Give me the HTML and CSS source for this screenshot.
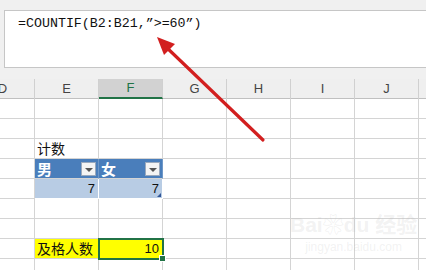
FILE: index.html
```html
<!DOCTYPE html>
<html>
<head>
<meta charset="utf-8">
<link rel="stylesheet" href="styles.css">
</head>
<body>
<div class="app">
  <div class="fbar">
    <div class="formula">=COUNTIF(B2:B21,”&gt;=60”)</div>
  </div>
  <div class="sheet">
    <div class="hdr">
      <div class="ch">D</div><div class="ch">E</div><div class="ch sel">F</div><div class="ch">G</div><div class="ch">H</div><div class="ch">I</div><div class="ch">J</div><div class="ch"></div>
    </div>
    <div class="grid">
      <div class="c"></div><div class="c"></div><div class="c"></div><div class="c"></div><div class="c"></div><div class="c"></div><div class="c"></div><div class="c"></div>
      <div class="c"></div><div class="c"></div><div class="c"></div><div class="c"></div><div class="c"></div><div class="c"></div><div class="c"></div><div class="c"></div>
      <div class="c"></div><div class="c txt">计数</div><div class="c"></div><div class="c"></div><div class="c"></div><div class="c"></div><div class="c"></div><div class="c"></div>
      <div class="c"></div><div class="c th"><span>男</span><i class="dd"></i></div><div class="c th"><span>女</span><i class="dd"></i></div><div class="c"></div><div class="c"></div><div class="c"></div><div class="c"></div><div class="c"></div>
      <div class="c"></div><div class="c td num">7</div><div class="c td num last">7</div><div class="c"></div><div class="c"></div><div class="c"></div><div class="c"></div><div class="c"></div>
      <div class="c"></div><div class="c"></div><div class="c"></div><div class="c"></div><div class="c"></div><div class="c"></div><div class="c"></div><div class="c"></div>
      <div class="c"></div><div class="c"></div><div class="c"></div><div class="c"></div><div class="c"></div><div class="c"></div><div class="c"></div><div class="c"></div>
      <div class="c"></div><div class="c yl txt">及格人数</div><div class="c yl num active">10</div><div class="c"></div><div class="c"></div><div class="c"></div><div class="c"></div><div class="c"></div>
      <div class="c"></div><div class="c"></div><div class="c"></div><div class="c"></div><div class="c"></div><div class="c"></div><div class="c"></div><div class="c"></div>
    </div>
  </div>
  <div class="wm"><div class="wm1">Bai<span class="paw">❀</span>du 经验</div><div class="wm2">jingyan.baidu.com</div></div>
  <svg class="arrow" width="426" height="270" viewBox="0 0 426 270">
    <line x1="263" y1="140" x2="164" y2="45" stroke="#d21f1f" stroke-width="3.2" stroke-linecap="round"/>
    <polygon points="157,37 175,44 164,55" fill="#d21f1f"/>
  </svg>
</div>
</body>
</html>
```
FILE: styles.css
```css
html, body {
  margin: 0;
  padding: 0;
  background: #f0f0f0;
  overflow: hidden;
}
.app {
  position: relative;
  width: 426px;
  height: 270px;
  overflow: hidden;
}
.fbar {
  padding: 10px 0 11px 4px;
}
.formula {
  height: 58px;
  background: #fff;
  border: 1px solid #c6c6c6;
  border-right: none;
  box-sizing: border-box;
  padding: 5px 0 0 13px;
  font-family: "Liberation Mono", "DejaVu Sans Mono", monospace;
  font-size: 13.3px;
  line-height: 16px;
  color: #111;
  letter-spacing: 0;
}
.sheet {
  margin-left: -29px;
}
.hdr {
  display: grid;
  grid-template-columns: repeat(7, 64px) 64px;
  height: 19px;
  border-bottom: 1px solid #c0c0c0;
  background: #efefef;
}
.ch {
  border-right: 1px solid #d0d0d0;
  font-family: "Liberation Sans", Arial, sans-serif;
  font-size: 13px;
  color: #444;
  text-align: center;
  line-height: 19px;
}
.ch.sel {
  background: #d2d2d2;
  color: #217346;
  box-sizing: border-box;
  border-bottom: 2px solid #217346;
  line-height: 18px;
}
.grid {
  display: grid;
  grid-template-columns: repeat(8, 64px);
  grid-auto-rows: 20px;
  background: #fff;
}
.c {
  border-right: 1px solid #d4d4d4;
  border-bottom: 1px solid #d4d4d4;
  font-family: "Noto Sans CJK SC", "Liberation Sans", sans-serif;
  font-size: 14px;
  line-height: 19px;
  color: #111;
  position: relative;
  white-space: nowrap;
}
.txt {
  padding-left: 2px;
}
.num {
  text-align: right;
  padding-right: 3px;
  font-family: "Liberation Sans", "Noto Sans CJK SC", sans-serif;
  font-size: 13px;
}
.th {
  background: #4a7ebb;
  border-right-color: #6f98c8;
  color: #fff;
  font-weight: bold;
  font-size: 15px;
  padding-left: 2px;
}
.dd {
  position: absolute;
  right: 2px;
  top: 3px;
  width: 15px;
  height: 14px;
  background: #f4f4f4;
  border: 1px solid #9aa9bd;
  box-sizing: border-box;
}
.dd::after {
  content: "";
  position: absolute;
  left: 3px;
  top: 5px;
  border-left: 4px solid transparent;
  border-right: 4px solid transparent;
  border-top: 4px solid #555;
}
.td {
  background: #b8cce4;
  border-right-color: #fff;
  border-bottom-color: #fff;
}
.last::after {
  content: "";
  position: absolute;
  right: 1px;
  bottom: 1px;
  border-left: 4px solid transparent;
  border-bottom: 4px solid #2f5597;
}
.yl {
  background: #ffff00;
}
.active {
  outline: 2px solid #217346;
  outline-offset: -1px;
  z-index: 2;
}
.active::after {
  content: "";
  position: absolute;
  right: -4px;
  bottom: -4px;
  width: 5px;
  height: 5px;
  background: #217346;
  border: 1px solid #fff;
}
.wm {
  position: absolute;
  left: 290px;
  top: 213px;
  color: rgba(180, 180, 180, 0.18);
  font-family: "Liberation Sans", "Noto Sans CJK SC", sans-serif;
  text-align: center;
}
.wm1 {
  font-size: 21px;
  font-weight: bold;
  line-height: 24px;
}
.wm2 {
  font-size: 12px;
  line-height: 14px;
  margin-top: 3px;
}
.arrow {
  position: absolute;
  left: 0;
  top: 0;
}
```
